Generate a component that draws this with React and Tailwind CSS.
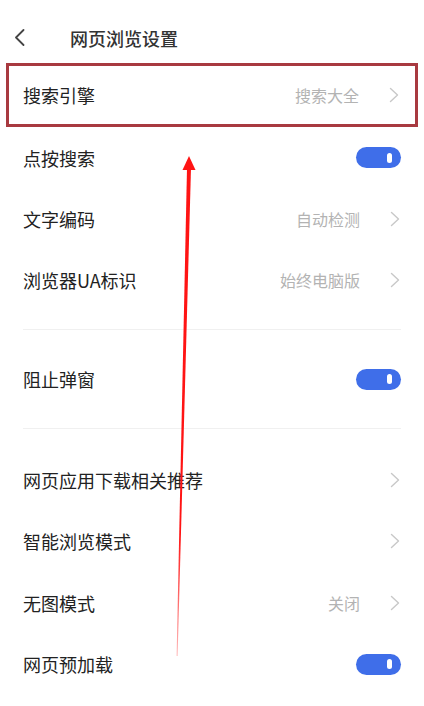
import React from "react";

const font = { fontFamily: '"Noto Sans CJK SC", "Noto Sans", sans-serif' };

function Chevron() {
  return (
    <svg width="10" height="16" viewBox="0 0 10 16" className="shrink-0">
      <path d="M1.5 1.5 L8.5 8 L1.5 14.5" fill="none" stroke="#c8c8c8" strokeWidth="1.4" strokeLinecap="round" strokeLinejoin="round" />
    </svg>
  );
}

function Toggle() {
  return (
    <div className="w-[45px] h-[21px] rounded-full bg-[#3f6ee9] flex items-center justify-end pr-[9px]">
      <div className="w-[5px] h-[10px] rounded-full bg-white" />
    </div>
  );
}

function Row({ label, value, type = "chevron", boxed = false, tall = false }) {
  return (
    <div className={`flex items-center justify-between ${tall ? "h-[61.5px]" : "h-[61.25px]"} ${boxed ? "" : "px-[23px]"}`}>
      <span className="text-[18px] text-[#222] leading-none">{label}</span>
      <div className="flex items-center">
        {value && <span className="text-[16px] text-[#b3b3b3] leading-none mr-[30px]">{value}</span>}
        {type === "toggle" ? <Toggle /> : <div className="mr-[1px]"><Chevron /></div>}
      </div>
    </div>
  );
}

export default function App() {
  return (
    <div className="relative w-[424px] h-[706px] bg-white overflow-hidden" style={font}>
      <div className="h-[63px] flex items-center pl-[14px] pt-[12px]">
        <svg width="11" height="17" viewBox="0 0 11 17">
          <path d="M9.5 1 L2 8.5 L9.5 16" fill="none" stroke="#444" strokeWidth="1.8" strokeLinecap="round" strokeLinejoin="round" />
        </svg>
        <span className="ml-[45px] text-[18px] text-[#333] font-medium leading-none">网页浏览设置</span>
      </div>
      <div className="mx-[6px] h-[64px] border-[3px] border-[#a83a40] pl-[14px] pr-[15px] flex flex-col justify-center">
        <Row label="搜索引擎" value="搜索大全" boxed />
      </div>
      <Row label="点按搜索" type="toggle" />
      <Row label="文字编码" value="自动检测" />
      <Row label="浏览器UA标识" value="始终电脑版" />
      <div className="mx-[23px] mt-[18px] mb-[19px] h-px bg-[#f0f0f0]" />
      <Row label="阻止弹窗" type="toggle" />
      <div className="mx-[23px] mt-[18px] mb-[20px] h-px bg-[#f0f0f0]" />
      <Row label="网页应用下载相关推荐" tall />
      <Row label="智能浏览模式" tall />
      <Row label="无图模式" value="关闭" tall />
      <Row label="网页预加载" type="toggle" tall />

      <svg className="absolute inset-0 pointer-events-none" width="424" height="706" viewBox="0 0 424 706">
        <defs>
          <linearGradient id="fade" x1="0" y1="0" x2="0" y2="1">
            <stop offset="0" stopColor="#ff1414" stopOpacity="1" />
            <stop offset="0.75" stopColor="#ff1414" stopOpacity="1" />
            <stop offset="1" stopColor="#ff1414" stopOpacity="0.3" />
          </linearGradient>
        </defs>
        <polygon points="187,168 191,168 177.6,656 176.6,656" fill="url(#fade)" />
        <polygon points="189,156 182.5,170 195.5,170" fill="#ff1414" />
      </svg>
    </div>
  );
}
